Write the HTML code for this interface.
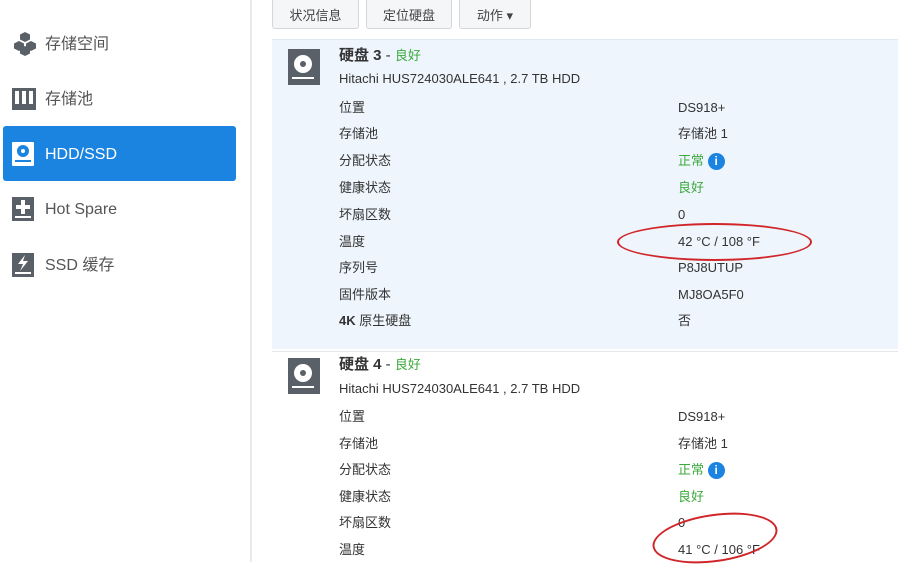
<!DOCTYPE html>
<html><head><meta charset="utf-8"><style>
*{margin:0;padding:0;box-sizing:border-box}
body{width:898px;height:562px;overflow:hidden;background:#fff;font-family:"Liberation Sans","Noto Sans CJK SC",sans-serif;color:#333;position:relative}
.side{position:absolute;left:0;top:0;width:252px;height:562px;background:#fff;border-right:2px solid #e8ebee}
.nav{position:absolute;left:3px;width:233px;height:55px;font-size:16px;color:#555}
.nav svg{position:absolute;left:9px;top:50%;transform:translateY(-50%)}
.nav span{position:absolute;left:42px;top:1px;line-height:55px}
.sel{background:#1a84e0;color:#fff;border-radius:3px}
.btn{position:absolute;top:0;height:29px;border:1px solid #d3d7db;border-top:none;border-radius:0 0 3px 3px;background:#f5f6f7;font-size:13px;color:#444;display:flex;align-items:center;justify-content:center}
.blk{position:absolute;left:272px;width:626px}
.t{position:absolute;font-size:13px;white-space:nowrap;line-height:18px;height:18px}
.g{color:#3ca93c}
.ell{position:absolute;border:2px solid #d0262a;border-radius:50%}
.i{display:inline-block;width:17px;height:17px;border-radius:50%;background:#1a84e0;color:#fff;font-size:12px;text-align:center;line-height:17px;font-weight:bold;vertical-align:top;margin-top:1px}
</style></head><body>
<div class="side">
 <div class="nav" style="top:16px"><svg width="26" height="26" viewBox="0 0 26 26" fill="#5a6068"><path d="M13 1l5 2.5v5L13 11 8 8.5v-5z"/><path d="M7 10l5 2.5v5L7 20 2 17.5v-5z"/><path d="M19 10l5 2.5v5L19 20l-5-2.5v-5z"/><path d="M13 15l5 2.5v5L13 25 8 22.5v-5z"/></svg><span>存储空间</span></div>
 <div class="nav" style="top:71px"><svg width="24" height="22" viewBox="0 0 24 22"><rect x="0" y="0" width="24" height="22" fill="#5a6068"/><rect x="3" y="3" width="4" height="13" fill="#fff"/><rect x="10" y="3" width="4" height="13" fill="#fff"/><rect x="17" y="3" width="4" height="13" fill="#fff"/></svg><span>存储池</span></div>
 <div class="nav sel" style="top:126px"><svg width="22" height="24" viewBox="0 0 22 24"><rect x="0" y="0" width="22" height="24" rx="1" fill="#fff"/><circle cx="11" cy="9" r="6" fill="#1a84e0"/><circle cx="11" cy="9" r="2" fill="#fff"/><rect x="3" y="18" width="16" height="2" fill="#1a84e0"/></svg><span>HDD/SSD</span></div>
 <div class="nav" style="top:181px"><svg width="22" height="24" viewBox="0 0 22 24"><rect width="22" height="24" fill="#5a6068"/><path d="M9 3h4v5h5v4h-5v5H9v-5H4V8h5z" fill="#fff"/><rect x="3" y="19" width="16" height="2" fill="#fff"/></svg><span>Hot Spare</span></div>
 <div class="nav" style="top:237px"><svg width="22" height="24" viewBox="0 0 22 24"><rect width="22" height="24" fill="#5a6068"/><path d="M13 2L6 11h5l-3 7 8-10h-5z" fill="#fff"/><rect x="3" y="19" width="16" height="2" fill="#fff"/></svg><span>SSD 缓存</span></div>
</div>
<div class="btn" style="left:272px;width:87px">状况信息</div>
<div class="btn" style="left:366px;width:86px">定位硬盘</div>
<div class="btn" style="left:459px;width:72px">动作 ▾</div>

<div class="blk" style="top:39px;height:310px;background:#eef5fc;border-top:1px solid #dfe8f2"></div>
<div class="blk" style="top:351px;height:211px;background:#fff;border-top:1px solid #e4e8ec"></div>

<svg style="position:absolute;left:288px;top:49px" width="32" height="36" viewBox="0 0 32 36"><rect width="32" height="36" fill="#5a6068"/><circle cx="15" cy="15" r="9" fill="#fff"/><circle cx="15" cy="15" r="3" fill="#5a6068"/><rect x="4" y="28" width="22" height="2" fill="#fff"/></svg>
<svg style="position:absolute;left:288px;top:358px" width="32" height="36" viewBox="0 0 32 36"><rect width="32" height="36" fill="#5a6068"/><circle cx="15" cy="15" r="9" fill="#fff"/><circle cx="15" cy="15" r="3" fill="#5a6068"/><rect x="4" y="28" width="22" height="2" fill="#fff"/></svg>

<div class="t" style="left:339px;top:47px;font-size:15px"><b>硬盘 3</b> - <span class="g" style="font-size:13px">良好</span></div>
<div class="t" style="left:339px;top:70px">Hitachi HUS724030ALE641 , 2.7 TB HDD</div>
<div class="t" style="left:339px;top:356px;font-size:15px"><b>硬盘 4</b> - <span class="g" style="font-size:13px">良好</span></div>
<div class="t" style="left:339px;top:380px">Hitachi HUS724030ALE641 , 2.7 TB HDD</div>

<div class="t" style="left:339px;top:99px">位置</div><div class="t" style="left:678px;top:99px">DS918+</div>
<div class="t" style="left:339px;top:125px">存储池</div><div class="t" style="left:678px;top:125px">存储池 1</div>
<div class="t" style="left:339px;top:152px">分配状态</div><div class="t g" style="left:678px;top:152px">正常 <span class="i">i</span></div>
<div class="t" style="left:339px;top:179px">健康状态</div><div class="t g" style="left:678px;top:179px">良好</div>
<div class="t" style="left:339px;top:206px">坏扇区数</div><div class="t" style="left:678px;top:206px">0</div>
<div class="t" style="left:339px;top:233px">温度</div><div class="t" style="left:678px;top:233px">42 °C / 108 °F</div>
<div class="t" style="left:339px;top:259px">序列号</div><div class="t" style="left:678px;top:259px">P8J8UTUP</div>
<div class="t" style="left:339px;top:286px">固件版本</div><div class="t" style="left:678px;top:286px">MJ8OA5F0</div>
<div class="t" style="left:339px;top:312px"><b>4K</b> 原生硬盘</div><div class="t" style="left:678px;top:312px">否</div>

<div class="t" style="left:339px;top:408px">位置</div><div class="t" style="left:678px;top:408px">DS918+</div>
<div class="t" style="left:339px;top:435px">存储池</div><div class="t" style="left:678px;top:435px">存储池 1</div>
<div class="t" style="left:339px;top:461px">分配状态</div><div class="t g" style="left:678px;top:461px">正常 <span class="i">i</span></div>
<div class="t" style="left:339px;top:488px">健康状态</div><div class="t g" style="left:678px;top:488px">良好</div>
<div class="t" style="left:339px;top:514px">坏扇区数</div><div class="t" style="left:678px;top:514px">0</div>
<div class="t" style="left:339px;top:541px">温度</div><div class="t" style="left:678px;top:541px">41 °C / 106 °F</div>

<div class="ell" style="left:617px;top:223px;width:195px;height:38px"></div>
<div class="ell" style="left:652px;top:514px;width:126px;height:48px;transform:rotate(-8deg)"></div>
</body></html>
